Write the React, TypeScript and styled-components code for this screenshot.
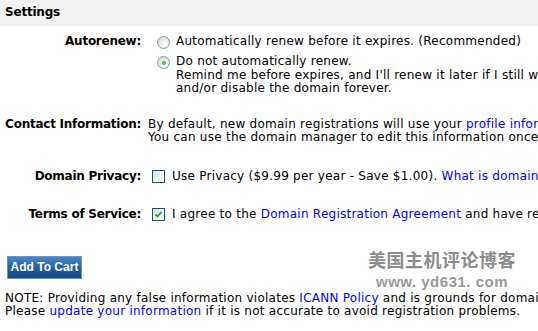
import React from 'react';
import styled, { createGlobalStyle } from 'styled-components';

const GlobalStyle = createGlobalStyle`
  html, body {
    margin: 0;
    padding: 0;
    background: #fff;
    overflow: hidden;
  }
  body {
    font-family: "DejaVu Sans", Verdana, sans-serif;
    font-size: 12px;
    letter-spacing: 0.25px;
    line-height: 13.5px;
    color: #000;
  }
`;

const Page = styled.div`
  position: relative;
  width: 820px;
  padding-bottom: 20px;
`;

const SectionHeader = styled.div`
  background: #f2f2f2;
  height: 26px;
  padding: 0 5px;
  display: flex;
  align-items: center;
  font-weight: bold;
  letter-spacing: -0.2px;
`;

const Form = styled.div`
  display: flex;
  flex-direction: column;
  padding-top: 9px;
`;

const Row = styled.div<{ $space?: number }>`
  display: grid;
  grid-template-columns: 141px 1fr;
  column-gap: 7px;
  margin-top: ${({ $space }) => $space ?? 0}px;
`;

const Label = styled.div<{ $offset?: number }>`
  text-align: right;
  font-weight: bold;
  letter-spacing: -0.25px;
  white-space: nowrap;
  padding-top: ${({ $offset }) => $offset ?? 0}px;
`;

const Value = styled.div`
  white-space: nowrap;
`;

const OptionList = styled.div`
  display: flex;
  flex-direction: column;
  gap: 6px;
  padding-left: 9px;
  white-space: nowrap;
`;

const Option = styled.div`
  display: flex;
  align-items: flex-start;
  gap: 6px;
`;

const Radio = styled.span<{ $checked?: boolean }>`
  flex: none;
  width: 11px;
  height: 11px;
  margin-top: 1px;
  border-radius: 50%;
  border: 1px solid #7f9db9;
  background: radial-gradient(circle at 60% 65%, #ffffff 0%, #e6e6e0 55%, #cfcfc8 100%);
  display: flex;
  align-items: center;
  justify-content: center;

  &::after {
    content: '';
    display: ${({ $checked }) => ($checked ? 'block' : 'none')};
    width: 4px;
    height: 4px;
    border-radius: 50%;
    background: radial-gradient(circle, #6fd36f 0%, #1f9a1f 100%);
  }
`;

const CheckRow = styled.div`
  display: flex;
  align-items: flex-start;
  gap: 7px;
  padding-left: 4px;
  white-space: nowrap;
`;

const Checkbox = styled.span`
  flex: none;
  position: relative;
  width: 11px;
  height: 11px;
  border: 1px solid #1c5180;
  background: linear-gradient(135deg, #dcdcd7 0%, #f4f4f0 60%, #ffffff 100%);

  svg {
    position: absolute;
    left: 1px;
    top: 1px;
  }
`;

const Link = styled.a`
  color: #0000ff;
  text-decoration: none;
`;

const Line = styled.div``;

const ButtonRow = styled.div`
  padding: 34px 0 0 7px;
`;

const CartButton = styled.button`
  width: 75px;
  height: 23px;
  padding: 0;
  border: 1px solid #6f93c4;
  background: linear-gradient(180deg, #4a86cc 0%, #2a64a8 45%, #0d4785 100%);
  color: #fff;
  font-family: "Liberation Sans", Arial, sans-serif;
  font-weight: bold;
  font-size: 12px;
  cursor: pointer;
`;

const Note = styled.div`
  padding: 13px 5px 0;
  white-space: nowrap;
`;

const Watermark = styled.div`
  position: absolute;
  left: 368px;
  top: 247px;
  color: #8c8c8c;
  text-align: center;
  font-weight: bold;
  letter-spacing: 0.5px;
  pointer-events: none;
`;

const WatermarkTitle = styled.div`
  font-family: "Noto Sans CJK SC", sans-serif;
  font-size: 18px;
  line-height: 24px;
`;

const WatermarkUrl = styled.div`
  font-family: "Liberation Sans", Arial, sans-serif;
  font-size: 15px;
  line-height: 22px;
  color: #999;
`;

const Check = () => (
  <svg width="9" height="9" viewBox="0 0 9 9">
    <path d="M1.5 4.5 L3.5 6.5 L7.5 2" fill="none" stroke="#21a121" strokeWidth="1.8" />
  </svg>
);

export default function App() {
  return (
    <Page>
      <GlobalStyle />
      <SectionHeader>Settings</SectionHeader>
      <Form>
        <Row>
          <Label>Autorenew:</Label>
          <OptionList>
            <Option>
              <Radio />
              <Line>Automatically renew before it expires. (Recommended)</Line>
            </Option>
            <Option>
              <Radio $checked />
              <div>
                <Line>Do not automatically renew.</Line>
                <Line>Remind me before expires, and I'll renew it later if I still want it,</Line>
                <Line>and/or disable the domain forever.</Line>
              </div>
            </Option>
          </OptionList>
        </Row>

        <Row $space={22}>
          <Label>Contact Information:</Label>
          <Value>
            <Line>
              By default, new domain registrations will use your <Link href="#">profile information</Link>.
            </Line>
            <Line>You can use the domain manager to edit this information once the domain is registered.</Line>
          </Value>
        </Row>

        <Row $space={25}>
          <Label $offset={-1}>Domain Privacy:</Label>
          <CheckRow>
            <Checkbox />
            <Line>
              Use Privacy ($9.99 per year - Save $1.00). <Link href="#">What is domain privacy?</Link>
            </Line>
          </CheckRow>
        </Row>

        <Row $space={25}>
          <Label $offset={-1}>Terms of Service:</Label>
          <CheckRow>
            <Checkbox>
              <Check />
            </Checkbox>
            <Line>
              I agree to the <Link href="#">Domain Registration Agreement</Link> and have read it.
            </Line>
          </CheckRow>
        </Row>
      </Form>

      <ButtonRow>
        <CartButton>Add To Cart</CartButton>
      </ButtonRow>

      <Note>
        <Line>
          NOTE: Providing any false information violates <Link href="#">ICANN Policy</Link> and is grounds for domain cancellation.
        </Line>
        <Line>
          Please <Link href="#">update your information</Link> if it is not accurate to avoid registration problems.
        </Line>
      </Note>

      <Watermark>
        <WatermarkTitle>美国主机评论博客</WatermarkTitle>
        <WatermarkUrl>www. yd631. com</WatermarkUrl>
      </Watermark>
    </Page>
  );
}
